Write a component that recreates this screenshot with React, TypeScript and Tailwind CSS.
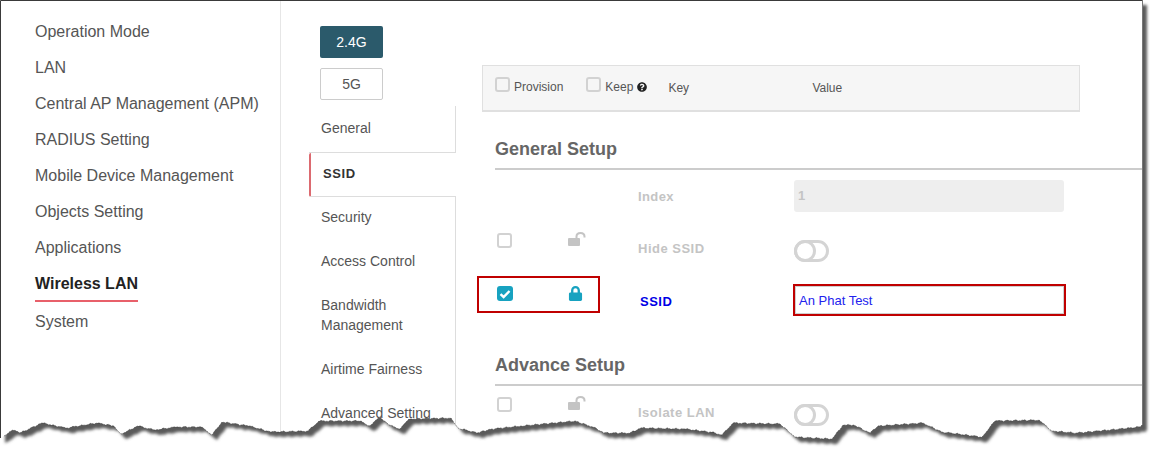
import { FaLock, FaQuestionCircle } from "react-icons/fa";

const menu = [
  "Operation Mode",
  "LAN",
  "Central AP Management (APM)",
  "RADIUS Setting",
  "Mobile Device Management",
  "Objects Setting",
  "Applications",
];

// torn paper edge, left to right
const tearPoints: [number, number][] = [
  [4, 436], [13, 430], [20, 433], [42, 423], [66, 428], [97, 423], [114, 426],
  [121, 434], [138, 426], [154, 430], [176, 427], [202, 427], [212, 435], [222, 422],
  [249, 426], [271, 432], [308, 431], [319, 421], [361, 421], [369, 426], [380, 417],
  [389, 425], [400, 429], [409, 419], [451, 418], [458, 428], [477, 433], [491, 429],
  [521, 426], [575, 421], [593, 427], [604, 433], [630, 433], [641, 428], [685, 429],
  [711, 432], [722, 435], [733, 423], [780, 424], [795, 437], [832, 439], [843, 425],
  [854, 425], [870, 433], [878, 426], [923, 423], [942, 432], [982, 437], [995, 421],
  [1039, 420], [1052, 431], [1077, 433], [1140, 427], [1142, 425],
];

function roughEdge() {
  const out: string[] = [];
  tearPoints.forEach(([x, y], i) => {
    const next = tearPoints[i + 1];
    if (!next) {
      out.push(`${x},${y}`);
      return;
    }
    const steps = Math.max(1, Math.round((next[0] - x) / 3));
    for (let s = 0; s < steps; s++) {
      const t = s / steps;
      const jitter = s === 0 ? 0 : Math.sin(x * 1.7 + s * 2.3) * 0.7;
      out.push(`${(x + (next[0] - x) * t).toFixed(1)},${(y + (next[1] - y) * t + jitter).toFixed(1)}`);
    }
  });
  return out;
}

const edge = roughEdge();
const edgeLine = `M${edge.join(" L")}`;
const pagePath = `M0,0 L1142,0 L${[...edge].reverse().join(" L")} L0,438 Z`;
const outsidePath = `M1150,0 L1150,449 L0,449 L0,438 L${edge.join(" L")} L1142,0 Z`;

function Checkbox({ checked }: { checked?: boolean }) {
  if (checked) {
    return (
      <div className="flex h-[15px] w-4 items-center justify-center rounded-[3px] bg-[#17a2c0]">
        <svg viewBox="0 0 12 12" className="h-3 w-3" fill="none" stroke="white" strokeWidth="2.4">
          <path d="M1.5 6.2 L4.6 9 L10.5 3" />
        </svg>
      </div>
    );
  }
  return <div className="h-[15px] w-[15px] rounded-[3px] border-2 border-[#d2d2d2] bg-white" />;
}

function OpenLock() {
  return (
    <svg viewBox="0 0 18 14" className="-mt-px h-[14px] w-[18px]" fill="none">
      <rect x="0" y="6" width="12" height="8" rx="1" fill="#c4c4c4" />
      <path d="M8.5 7 V4.5 C8.5 2.3 10.2 1 12.5 1 C14.8 1 16.5 2.3 16.5 4.5 V5.5" stroke="#c4c4c4" strokeWidth="2" />
    </svg>
  );
}

function Toggle() {
  return (
    <div className="mt-2 h-[22px] w-[35px] rounded-full border-[3px] border-[#d4d4d4]">
      <div className="-m-[3px] h-[22px] w-[22px] rounded-full border-[3px] border-[#d4d4d4]" />
    </div>
  );
}

function SectionTitle({ title }: { title: string }) {
  return (
    <h2 className="border-b-2 border-[#cccccc] pb-[7px] text-[18px] font-bold leading-[24px] text-[#666666]">
      {title}
    </h2>
  );
}

function Row({
  label,
  active,
  children,
}: {
  label: string;
  active?: boolean;
  children: React.ReactNode;
}) {
  return (
    <div className="flex h-8 items-start">
      <div
        className={`-ml-[18px] -mt-2 flex h-[37px] w-[123px] shrink-0 items-start border-2 pl-[18px] ${
          active ? "border-[#c00000] pt-2" : "border-transparent pt-[7px]"
        }`}
      >
        <div className="w-[71px]">
          <Checkbox checked={active} />
        </div>
        {active ? <FaLock className="text-[15px] text-[#17a2c0]" /> : <OpenLock />}
      </div>
      <div
        className={`w-[156px] shrink-0 text-[13px] font-bold leading-8 tracking-[0.5px] ${
          active ? "ml-[38px] mt-[2px] pl-[2px] tracking-[0.2px] text-[#0000e6]" : "ml-[38px] mt-px text-[#c4c4c4]"
        }`}
      >
        {label}
      </div>
      {children}
    </div>
  );
}

export default function App() {
  return (
    <div className="relative flex h-[449px] w-[1150px] overflow-hidden bg-white font-['Liberation_Sans',Arial,sans-serif]">
      <aside className="w-[281px] shrink-0 border-r border-[#e6e6e6] pl-[35px] pt-[14px] text-[16px] text-[#555555]">
        {menu.map((m) => (
          <div key={m} className="h-9 leading-9">
            {m}
          </div>
        ))}
        <div className="h-9 leading-9">
          <span className="font-bold text-[#222222]">Wireless LAN</span>
          <div className="-mt-[2px] h-[2px] w-[103px] bg-[#e8606a]" />
        </div>
        <div className="mt-[2px] h-9 leading-9">System</div>
      </aside>

      <div className="w-[175px] shrink-0">
        <div className="ml-[39px] mt-[26px] flex flex-col gap-[10px]">
          <div className="flex h-8 w-[63px] items-center justify-center rounded-[2px] bg-[#2b5a6b] text-[14px] text-white">
            2.4G
          </div>
          <div className="flex h-8 w-[63px] items-center justify-center rounded-[2px] border border-[#cccccc] text-[14px] text-[#555555]">
            5G
          </div>
        </div>
        <div className="ml-7 mt-[6px] w-[147px] text-[14px] leading-5 text-[#555555]">
          <div className="flex h-[47px] items-center border-b border-r border-[#dddddd] pb-[3px] pl-3">General</div>
          <div className="flex h-[44px] items-center rounded-l-[2px] border-b border-l-[2px] border-[#dddddd] border-l-[#dc6a70] pb-[2px] pl-3 text-[13px] font-bold tracking-[0.6px] text-[#333333]">
            SSID
          </div>
          <div className="border-r border-[#dddddd] pl-3">
            <div className="flex h-[42px] items-center pb-[2px]">Security</div>
            <div className="flex h-11 items-center">Access Control</div>
            <div className="flex h-16 items-center">
              Bandwidth
              <br />
              Management
            </div>
            <div className="flex h-11 items-center">Airtime Fairness</div>
            <div className="flex h-[60px] items-start pt-3">Advanced Setting</div>
          </div>
        </div>
      </div>

      <main className="min-w-0 flex-1">
        <div className="ml-[26px] mt-[65px] flex h-[47px] w-[598px] items-start border border-b-2 border-[#e0e0e0] bg-[#f6f6f6] pl-3 pt-[11px] text-[12px] leading-5 text-[#555555]">
          <div className="h-[15px] w-[15px] rounded-[3px] border-2 border-[#d2d2d2]" />
          <span className="ml-[4px]">Provision</span>
          <div className="ml-[23px] h-[15px] w-[15px] rounded-[3px] border-2 border-[#d2d2d2]" />
          <span className="ml-[4px]">Keep</span>
          <FaQuestionCircle className="ml-[4px] mt-[5px] text-[10px] text-[#222222]" />
          <span className="ml-[21px] mt-px w-[144px]">Key</span>
          <span className="mt-px">Value</span>
        </div>

        <section className="ml-[39px] mt-[25px]">
          <SectionTitle title="General Setup" />
          <div className="mt-[10px] flex h-8 items-start">
            <div className="ml-[143px] mt-px w-[156px] shrink-0 text-[13px] font-bold leading-8 tracking-[0.4px] text-[#c4c4c4]">
              Index
            </div>
            <div className="flex h-8 w-[270px] items-center rounded-[3px] bg-[#eeeeee] pl-1 text-[13px] font-bold text-[#c4c4c4]">
              1
            </div>
          </div>
          <div className="mt-5">
            <Row label="Hide SSID">
              <Toggle />
            </Row>
          </div>
          <div className="mt-5">
            <Row label="SSID" active>
              <div className="-ml-px h-8 w-[273px] border-2 border-[#c00000]">
                <div className="flex h-full items-center border border-[#cfcfcf] pl-[3px] pt-[2px] text-[13px] text-[#2222ee]">
                  An Phat Test
                </div>
              </div>
            </Row>
          </div>
        </section>

        <section className="ml-[39px] mt-[37px]">
          <SectionTitle title="Advance Setup" />
          <div className="mt-[10px]">
            <Row label="Isolate LAN">
              <Toggle />
            </Row>
          </div>
        </section>
      </main>

      {/* torn screenshot edge with drop shadow */}
      <svg className="pointer-events-none absolute inset-0" width="1150" height="449" viewBox="0 0 1150 449">
        <defs>
          <filter id="tearBlur" x="-5%" y="-5%" width="110%" height="110%">
            <feGaussianBlur stdDeviation="1.8" />
          </filter>
          <clipPath id="outside">
            <path d={outsidePath} />
          </clipPath>
        </defs>
        <path d={outsidePath} fill="white" />
        <g clipPath="url(#outside)">
          <path d={pagePath} transform="translate(5 5)" fill="#5a5a5a" filter="url(#tearBlur)" />
        </g>
        <path d="M0.5,438 L0.5,0.5 L1142,0.5" fill="none" stroke="#3a3a3a" strokeWidth="1" />
        <path d="M1142.5,0 L1142.5,425" fill="none" stroke="#777777" strokeWidth="1" />
        <path d={edgeLine} fill="none" stroke="#333333" strokeWidth="0.5" strokeDasharray="2 1" />
      </svg>
    </div>
  );
}
